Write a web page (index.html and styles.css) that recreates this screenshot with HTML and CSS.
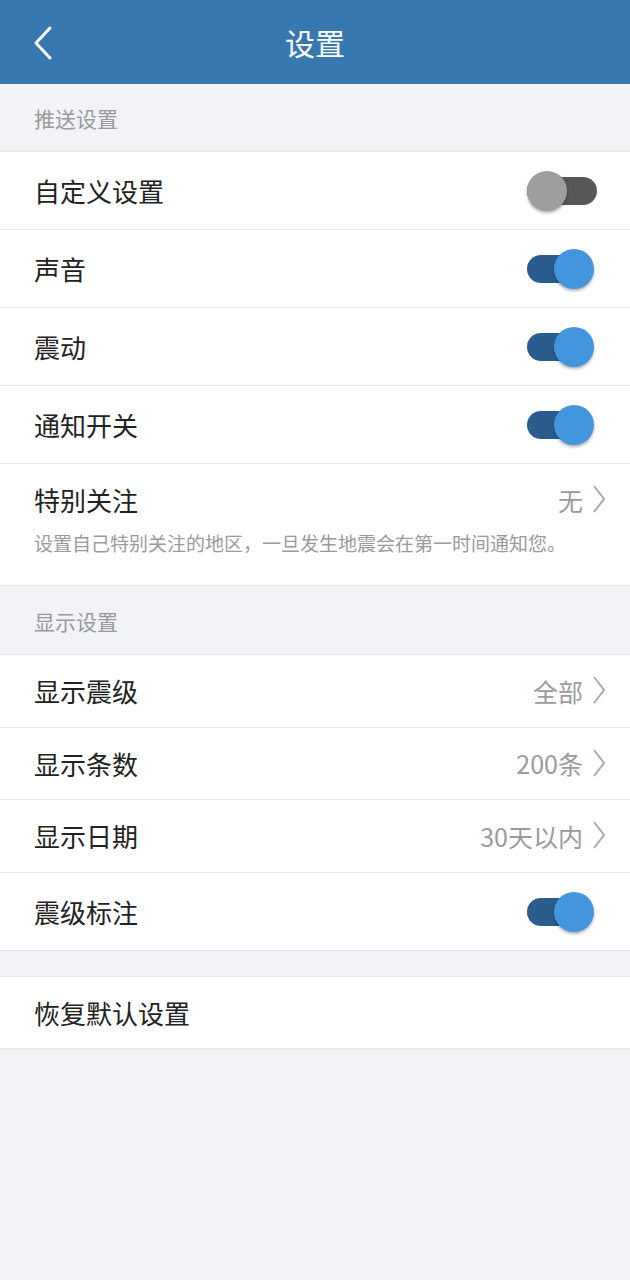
FILE: index.html
```html
<!DOCTYPE html>
<html lang="zh-CN">
<head>
<meta charset="utf-8">
<title>设置</title>
<link rel="stylesheet" href="styles.css">
</head>
<body>
<div class="app">
  <header class="topbar">
    <span class="back">
      <svg width="20" height="34" viewBox="0 0 20 34"><path d="M17 2 L3 17 L17 32" fill="none" stroke="#fff" stroke-width="3" stroke-linecap="round" stroke-linejoin="round"/></svg>
    </span>
    <h1 class="title">设置</h1>
  </header>

  <div class="section-head s1">推送设置</div>
  <div class="group">
    <div class="row r78"><span class="label">自定义设置</span><span class="switch off"><span class="knob"></span></span></div>
    <div class="row r78"><span class="label">声音</span><span class="switch on"><span class="knob"></span></span></div>
    <div class="row r78"><span class="label">震动</span><span class="switch on"><span class="knob"></span></span></div>
    <div class="row r78"><span class="label">通知开关</span><span class="switch on"><span class="knob"></span></span></div>
    <div class="row special">
      <div class="special-top"><span class="label">特别关注</span><span class="value">无<svg class="chev" width="14" height="30" viewBox="0 0 14 30"><path d="M2 2 L12 15 L2 28" fill="none" stroke="#aaa" stroke-width="2"/></svg></span></div>
      <div class="desc">设置自己特别关注的地区，一旦发生地震会在第一时间通知您。</div>
    </div>
  </div>

  <div class="section-head s2">显示设置</div>
  <div class="group">
    <div class="row r73"><span class="label">显示震级</span><span class="value">全部<svg class="chev" width="14" height="30" viewBox="0 0 14 30"><path d="M2 2 L12 15 L2 28" fill="none" stroke="#aaa" stroke-width="2"/></svg></span></div>
    <div class="row r72"><span class="label">显示条数</span><span class="value">200条<svg class="chev" width="14" height="30" viewBox="0 0 14 30"><path d="M2 2 L12 15 L2 28" fill="none" stroke="#aaa" stroke-width="2"/></svg></span></div>
    <div class="row r73"><span class="label">显示日期</span><span class="value">30天以内<svg class="chev" width="14" height="30" viewBox="0 0 14 30"><path d="M2 2 L12 15 L2 28" fill="none" stroke="#aaa" stroke-width="2"/></svg></span></div>
    <div class="row r77"><span class="label">震级标注</span><span class="switch on"><span class="knob"></span></span></div>
  </div>

  <div class="group last">
    <div class="row r71"><span class="label">恢复默认设置</span></div>
  </div>
</div>
</body>
</html>
```

FILE: styles.css
```css
* { box-sizing: border-box; margin: 0; padding: 0; }
html, body { background: #f1f3f7; }
body {
  font-family: "Noto Sans CJK SC", "Noto Sans", Roboto, sans-serif;
  width: 630px;
  min-height: 1280px;
}
.app { display: flex; flex-direction: column; }

.topbar {
  height: 84px;
  background: #3778b0;
  display: flex;
  align-items: center;
  justify-content: center;
  position: relative;
}
.back {
  position: absolute;
  left: 33px;
  top: 26px;
  display: flex;
}
.title {
  color: #fff;
  font-size: 30px;
  font-weight: 400;
  line-height: 1;
}

.section-head {
  display: flex;
  align-items: center;
  padding-left: 34px;
  color: #9a9a9a;
  font-size: 21px;
  border-bottom: 1px solid #e4e5e8;
}
.section-head.s1 { height: 68px; padding-top: 0px; }
.section-head.s2 { height: 69px; padding-top: 2px; }

.group { background: #fff; display: flex; flex-direction: column; }
.group:not(.last) { border-bottom: 1px solid #e4e5e8; }
.group.last { margin-top: 25px; border-top: 1px solid #e4e5e8; border-bottom: 1px solid #e4e5e8; }

.row {
  display: flex;
  align-items: center;
  justify-content: space-between;
  padding: 0 24px 0 34px;
  border-bottom: 1px solid #e8e8ea;
}
.group .row:last-child { border-bottom: none; }
.r78 { height: 78px; }
.r73 { height: 73px; }
.r72 { height: 72px; }
.r71 { height: 71px; }
.r77 { height: 77px; }

.label { color: #222; font-size: 26px; line-height: 1; }

.value {
  display: flex;
  align-items: center;
  gap: 9px;
  color: #9b9b9b;
  font-size: 25px;
  line-height: 1;
}
.chev { display: block; margin-top: -2px; }

.special {
  height: 121px;
  flex-direction: column;
  align-items: stretch;
  justify-content: flex-start;
  padding-top: 21px;
}
.special-top { display: flex; justify-content: space-between; align-items: center; height: 30px; }
.desc { color: #9a9a9a; font-size: 19px; margin-top: 17px; line-height: 1.2; }

.switch {
  position: relative;
  width: 70px;
  height: 40px;
  margin-right: 9px;
}
.switch::before {
  content: "";
  position: absolute;
  left: 0;
  top: 6px;
  height: 28px;
  border-radius: 14px;
}
.switch.off::before { background: #575757; width: 70px; }
.switch.on::before { background: #2a5d8e; width: 62px; }
.knob {
  position: absolute;
  top: 0;
  width: 40px;
  height: 40px;
  border-radius: 50%;
  box-shadow: 0 2px 3px rgba(0,0,0,0.3);
}
.switch.off .knob { left: 0; background: #9e9e9e; }
.switch.on .knob { left: 27px; background: #4396de; }
```
